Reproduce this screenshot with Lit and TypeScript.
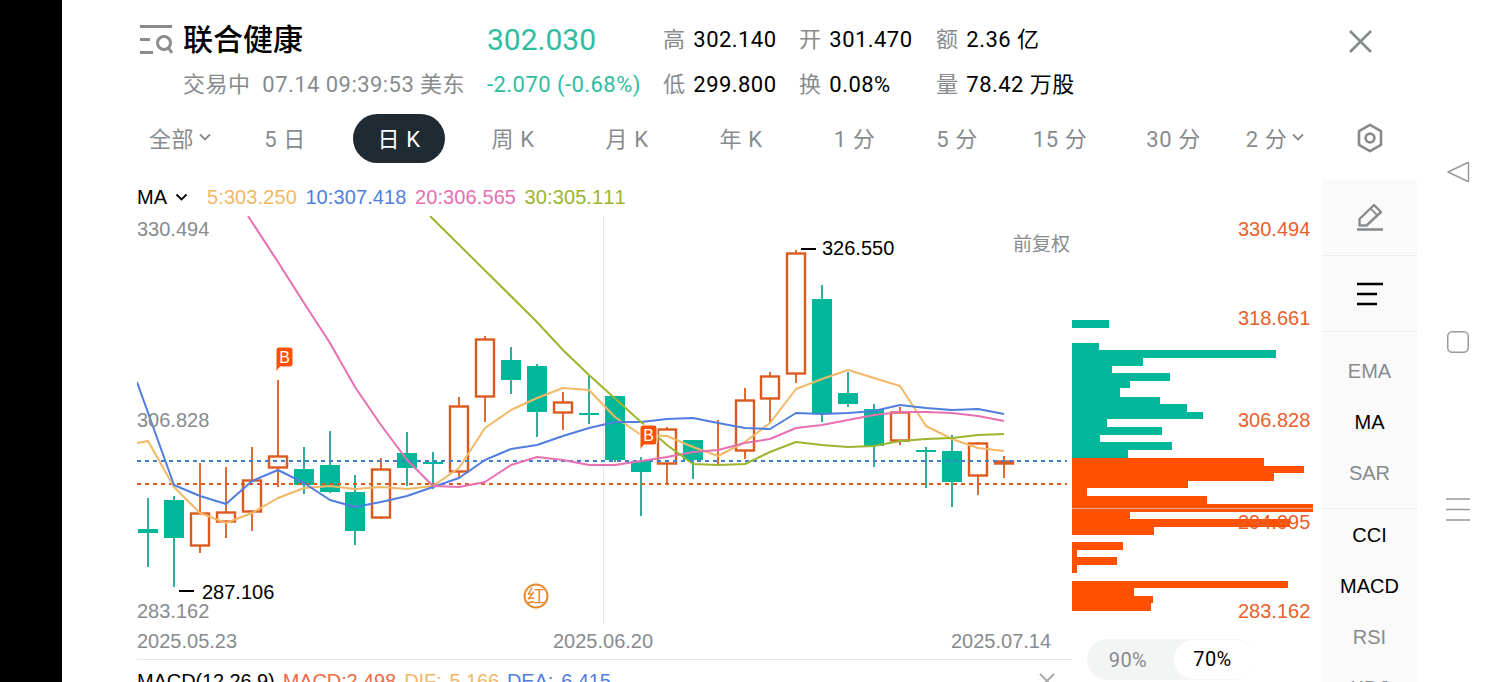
import { LitElement, html, css, svg } from 'lit'
import { customElement } from 'lit/decorators.js'

const GREEN = '#00b899'
const GREEN_WICK = '#1aa392'
const RED = '#dc5a1e'
const BAR_RED = '#ff5000'

// x, wick top, wick bottom, body top, body bottom (page pixels, read off the chart)
type Candle = [number, number, number, number, number]

const UP: Candle[] = [
  [200, 463, 553, 513, 546],
  [226, 467, 538, 512, 522],
  [252, 447, 531, 480, 512],
  [278, 380, 487, 456, 468],
  [381, 458, 519, 469, 518],
  [459, 397, 477, 406, 472],
  [485, 336, 422, 339, 397],
  [563, 392, 430, 402, 413],
  [667, 427, 484, 429, 464],
  [718, 420, 466, 455, 456],
  [745, 388, 459, 400, 451],
  [770, 372, 423, 376, 399],
  [796, 250, 383, 253, 374],
  [900, 407, 445, 412, 441],
  [978, 442, 495, 443, 476],
  [1004, 456, 478, 461, 464],
]

const DOWN: Candle[] = [
  [148, 498, 567, 529, 533],
  [174, 496, 587, 500, 538],
  [304, 447, 494, 469, 485],
  [330, 431, 493, 465, 492],
  [355, 475, 545, 492, 531],
  [407, 432, 486, 453, 468],
  [433, 452, 489, 462, 464],
  [511, 347, 394, 360, 380],
  [537, 364, 437, 366, 412],
  [589, 376, 424, 413, 415],
  [615, 396, 462, 396, 460],
  [641, 457, 516, 461, 472],
  [693, 440, 479, 440, 460],
  [822, 285, 422, 299, 413],
  [848, 372, 407, 393, 404],
  [874, 404, 467, 409, 446],
  [926, 447, 488, 450, 452],
  [952, 435, 507, 451, 482],
]

const MA5 =
  '137,443 148,441 174,487 200,513 226,523 252,513 278,498 304,488 330,486 355,489 381,487 407,489 433,486 459,468 485,428 511,410 537,398 563,388 589,390 615,417 641,435 667,436 693,447 718,456 745,442 770,423 796,389 822,379 848,370 874,378 900,386 926,426 952,439 978,448 1004,451'
const MA10 =
  '137,382 174,485 200,496 226,504 252,481 278,470 304,483 330,500 355,507 381,502 407,496 433,487 459,478 485,460 511,449 537,445 563,436 589,428 615,422 641,422 667,419 693,418 718,423 745,428 770,429 796,413 822,414 848,413 874,411 900,405 926,408 952,410 978,409 1004,414'
const MA20 =
  '248,216 278,262 304,303 330,343 355,387 381,425 407,460 433,486 459,487 485,482 511,465 537,457 563,460 589,465 615,465 641,461 667,457 693,452 718,450 745,443 770,439 796,428 822,425 848,420 874,415 900,412 926,412 952,413 978,416 1004,421'
const MA30 =
  '430,216 535,320 563,350 589,375 641,422 667,445 693,464 718,465 745,464 770,452 796,442 822,445 848,447 874,446 900,441 926,439 952,438 978,435 1004,434'

// volume profile: top, bottom, length
const PROFILE_UP = [
  [320, 328, 37], [343, 350, 27], [350, 358, 204], [358, 366, 71], [366, 373, 40],
  [373, 381, 98], [381, 388, 58], [388, 397, 48], [397, 404, 88], [404, 412, 115],
  [412, 419, 131], [419, 427, 35], [427, 435, 90], [435, 442, 28], [442, 450, 100],
  [450, 458, 56],
]
const PROFILE_DOWN = [
  [458, 466, 192], [466, 473, 232], [473, 481, 202], [481, 488, 116], [488, 496, 15],
  [496, 504, 135], [504, 512, 241], [512, 519, 58], [519, 527, 218], [527, 535, 82],
  [542, 550, 51], [550, 557, 5], [557, 565, 45], [565, 573, 5],
  [581, 588, 216], [588, 596, 62], [596, 603, 81], [603, 611, 79],
]

const TABS = ['5 日', '日 K', '周 K', '月 K', '年 K', '1 分', '5 分', '15 分', '30 分']

const chevron = (w = 12) => html`<svg class="chev" width=${w} height="8" viewBox="0 0 12 8">
  <path d="M1 1.5 6 6.5 11 1.5" fill="none" stroke="currentColor" stroke-width="1.8" />
</svg>`

@customElement('app-root')
export class AppRoot extends LitElement {
  static styles = css`
    :host {
      display: flex;
      width: 1500px;
      height: 682px;
      overflow: hidden;
      background: #fff;
      color: #000;
      font-family: Roboto, 'Noto Sans CJK SC', sans-serif;
    }

    .edge {
      flex: none;
      width: 62px;
      background: #000;
    }

    .main {
      flex: none;
      width: 1355px;
      display: flex;
      flex-direction: column;
    }

    .main > * {
      flex: none;
    }

    .head {
      display: grid;
      grid-template-columns: 44px 304px 176px 136px 137px auto;
      grid-template-rows: 44px 46px;
      align-items: center;
      height: 62px;
      padding: 18px 0 0 77px;
      font-size: 22px;
      letter-spacing: 0.45px;
      line-height: 30px;
    }

    .search {
      display: block;
      grid-row: 1;
    }

    .name {
      font-size: 30px;
      font-weight: 500;
      letter-spacing: 0;
      line-height: 40px;
    }

    .price {
      color: #2ebd9f;
      font-size: 30px;
      letter-spacing: 0;
    }

    .status {
      grid-column: 2;
      color: #888b8e;
      white-space: nowrap;
    }

    .status .clock {
      margin-left: 12px;
    }

    .change {
      color: #2ebd9f;
      white-space: nowrap;
    }

    .stat {
      white-space: nowrap;
    }

    .stat span {
      color: #888b8e;
      margin-right: 2px;
    }

    .close {
      position: absolute;
      left: 1348px;
      top: 29px;
    }

    .tabs {
      display: grid;
      grid-template-columns: 104px 106px 122px 106px 122px 106px 121px 84px 122px 105px 98px 92px;
      align-items: center;
      height: 50px;
      margin-top: 33px;
      padding-left: 66px;
      color: #888b8e;
      font-size: 22px;
      letter-spacing: 0.6px;
    }

    .tab {
      display: flex;
      align-items: center;
      justify-content: center;
      height: 49px;
      padding-bottom: 2px;
      box-sizing: border-box;
      white-space: nowrap;
    }

    .tab.on {
      width: 92px;
      justify-self: center;
      border-radius: 25px;
      background: #1f2a33;
      color: #fff;
    }

    .tab.gear {
      padding-bottom: 0;
    }

    .chev {
      margin-left: 5px;
    }

    .lower {
      display: grid;
      grid-template-columns: 1185px 95px;
      margin-top: 17px;
      padding-left: 75px;
    }

    .ma {
      display: flex;
      align-items: center;
      gap: 8.5px;
      height: 36px;
      padding-bottom: 2px;
      box-sizing: border-box;
      font-family: 'Liberation Sans', sans-serif;
      font-size: 20px;
      font-kerning: none;
      letter-spacing: 0.1px;
    }

    .ma .kind {
      display: flex;
      align-items: center;
      width: 61.5px;
      color: #000;
    }

    .ma .kind .chev {
      margin-left: 8px;
    }

    .chart {
      display: block;
    }

    .chart text {
      font-family: 'Liberation Sans', sans-serif;
      font-size: 20px;
    }

    .chart .axis {
      fill: #888b8e;
    }

    .chart .tag {
      fill: #e8602a;
    }

    .chart .note {
      fill: #000;
    }

    .chart .adj {
      font-family: 'Noto Sans CJK SC', sans-serif;
      font-size: 19px;
      fill: #888b8e;
    }

    .chart .b {
      fill: #fff;
      font-size: 16px;
      text-anchor: middle;
    }

    .chart .hong {
      fill: #e8892c;
      font-family: 'Noto Sans CJK SC', sans-serif;
      font-size: 18px;
      text-anchor: middle;
    }

    .foot {
      display: grid;
      grid-template-columns: 935px 250px;
    }

    .dates {
      display: grid;
      grid-template-columns: 416px 398px auto;
      align-items: center;
      height: 35px;
      border-bottom: 1px solid #e6e6e6;
      color: #888b8e;
      font-family: 'Liberation Sans', sans-serif;
      font-size: 20px;
    }

    .macd {
      display: flex;
      gap: 8px;
      padding-top: 9px;
      font-family: 'Liberation Sans', sans-serif;
      font-size: 20px;
      letter-spacing: -0.1px;
      word-spacing: -1.5px;
      line-height: 24px;
      white-space: nowrap;
    }

    .macd .x {
      position: absolute;
      left: 1039px;
      top: 673px;
    }

    .ratio {
      display: grid;
      grid-template-columns: 87px 81px;
      align-items: center;
      width: 168px;
      height: 41px;
      margin: 15px 0 0 15px;
      border-radius: 21px;
      background: #f3f5f5;
      color: #888b8e;
      font-size: 20px;
      letter-spacing: 0.4px;
      text-align: center;
    }

    .ratio .off {
      padding-right: 5px;
    }

    .ratio .on {
      height: 39px;
      padding-right: 4px;
      box-sizing: border-box;
      line-height: 39px;
      border-radius: 20px;
      background: #fff;
      color: #000;
    }

    .side {
      display: flex;
      flex-direction: column;
      height: 503px;
      overflow: hidden;
      background: #fafafa;
      font-family: 'Liberation Sans', sans-serif;
      font-size: 20px;
      color: #000;
    }

    .tool {
      display: flex;
      flex: none;
      align-items: center;
      justify-content: center;
      height: 76px;
      border-bottom: 1px solid #ececec;
      box-sizing: border-box;
    }

    .group {
      flex: none;
      padding: 14px 0 9px;
      border-bottom: 1px solid #ececec;
    }

    .group:last-child {
      padding-top: 1px;
      border-bottom: none;
    }

    .ind {
      height: 51px;
      line-height: 51px;
      text-align: center;
    }

    .ind.off {
      color: #888b8e;
    }

    .nav {
      flex: none;
      width: 83px;
      display: flex;
      flex-direction: column;
      align-items: center;
      gap: 146px;
      padding-top: 160px;
      box-sizing: border-box;
    }

    .nav svg {
      display: block;
      margin-left: -1px;
    }

    .nav .lines {
      margin-top: -2px;
    }
  `

  private renderCandles() {
    const up = UP.map(
      ([x, wt, wb, bt, bb]) => svg`
        <line x1=${x} x2=${x} y1=${wt} y2=${wb} stroke=${RED} stroke-width="1.8" />
        <rect x=${x - 9} y=${bt + 0.5} width="18" height=${bb - bt - 1} fill="#fff" stroke=${RED} stroke-width="2.4" />`,
    )
    const down = DOWN.map(
      ([x, wt, wb, bt, bb]) => svg`
        <line x1=${x} x2=${x} y1=${wt} y2=${wb} stroke=${GREEN_WICK} stroke-width="1.8" />
        <rect x=${x - 10} y=${bt} width="20" height=${bb - bt} fill=${GREEN} />`,
    )
    return [up, down]
  }

  private renderProfile() {
    const bars = (rows: number[][], fill: string) =>
      rows.map(
        ([t, b, w]) => svg`<rect x="1072" y=${t} width=${w} height=${b - t} fill=${fill} />`,
      )
    return [bars(PROFILE_UP, GREEN), bars(PROFILE_DOWN, BAR_RED)]
  }

  private renderChart() {
    const line = (points: string, color: string) =>
      svg`<polyline points=${points} fill="none" stroke=${color} stroke-width="2" stroke-linejoin="round" />`
    const badge = (x: number, y: number) => svg`
      <path
        d="M${x + 3} ${y}h11a3 3 0 0 1 3 3v14a3 3 0 0 1 -3 3h-10l-4 5v-22a3 3 0 0 1 3 -3z"
        fill=${BAR_RED}
        stroke="#fff"
        stroke-width="1"
      />
      <text class="b" x=${x + 8.5} y=${y + 16}>B</text>`

    return html`<svg class="chart" width="1185" height="408" viewBox="137 216 1185 408">
      <line x1="603.5" x2="603.5" y1="216" y2="624" stroke="#e8e8e8" />
      ${this.renderCandles()}
      <line x1="137" x2="1067" y1="461" y2="461" stroke="#3f7fcf" stroke-width="2" stroke-dasharray="4 4" />
      <line x1="137" x2="1067" y1="484" y2="484" stroke=${RED} stroke-width="2" stroke-dasharray="4 4" />
      ${line(MA5, '#f2b866')} ${line(MA10, '#4f7ee0')} ${line(MA20, '#e86fb0')} ${line(MA30, '#9ab52e')}
      ${badge(276, 347)} ${badge(640, 425)}
      <circle cx="536" cy="596" r="11.5" fill="none" stroke="#e8892c" stroke-width="2" />
      <text class="hong" x="536" y="602.5">红</text>

      <text class="axis" x="137" y="236">330.494</text>
      <text class="axis" x="137" y="427">306.828</text>
      <text class="axis" x="137" y="618">283.162</text>
      <text class="adj" x="1013" y="251">前复权</text>
      <line x1="801" x2="816" y1="249" y2="249" stroke="#000" stroke-width="2" />
      <text class="note" x="822" y="255">326.550</text>
      <line x1="179" x2="194" y1="591" y2="591" stroke="#000" stroke-width="2" />
      <text class="note" x="202" y="599">287.106</text>

      ${this.renderProfile()}
      <line x1="1072" x2="1313" y1="508.5" y2="508.5" stroke="#d8b0a0" />
      <text class="tag" x="1238" y="236">330.494</text>
      <text class="tag" x="1238" y="325">318.661</text>
      <text class="tag" x="1238" y="427">306.828</text>
      <text class="tag" x="1238" y="529">294.995</text>
      <text class="tag" x="1238" y="618">283.162</text>
    </svg>`
  }

  render() {
    return html`
      <div class="edge"></div>
      <div class="main">
        <div class="head">
          <svg class="search" width="34" height="30" viewBox="0 0 34 30" fill="none" stroke="#8a8d90" stroke-width="3">
            <path d="M1 1.5h32M1 14.5h10M1 27.5h13" />
            <circle cx="25" cy="18" r="6.5" />
            <path d="M29.5 23 33 28" />
          </svg>
          <div class="name">联合健康</div>
          <div class="price">302.030</div>
          <div class="stat"><span>高</span> 302.140</div>
          <div class="stat"><span>开</span> 301.470</div>
          <div class="stat"><span>额</span> 2.36 亿</div>
          <div class="status">交易中<span class="clock">07.14 09:39:53 美东</span></div>
          <div class="change">-2.070 (-0.68%)</div>
          <div class="stat"><span>低</span> 299.800</div>
          <div class="stat"><span>换</span> 0.08%</div>
          <div class="stat"><span>量</span> 78.42 万股</div>
        </div>
        <svg class="close" width="25" height="25" viewBox="0 0 25 25" stroke="#868b8e" stroke-width="2.6">
          <path d="M2 2 23 23M23 2 2 23" />
        </svg>

        <div class="tabs">
          <div class="tab">全部${chevron()}</div>
          ${TABS.map((t) => html`<div class="tab ${t === '日 K' ? 'on' : ''}">${t}</div>`)}
          <div class="tab">2 分${chevron()}</div>
          <div class="tab gear">
            <svg width="26" height="30" viewBox="0 0 26 30" fill="none" stroke="#888b8e" stroke-width="2.6">
              <path d="M13 1.8 24 8.2v13.6L13 28.2 2 21.8V8.2z" stroke-linejoin="round" />
              <circle cx="13" cy="15" r="4.4" />
            </svg>
          </div>
        </div>

        <div class="lower">
          <div>
            <div class="ma">
              <div class="kind">MA${chevron(13)}</div>
              <span style="color:#f2b866">5:303.250</span>
              <span style="color:#4f7ee0">10:307.418</span>
              <span style="color:#e86fb0">20:306.565</span>
              <span style="color:#9ab52e">30:305.111</span>
            </div>
            ${this.renderChart()}
            <div class="foot">
              <div>
                <div class="dates">
                  <span>2025.05.23</span><span>2025.06.20</span><span>2025.07.14</span>
                </div>
                <div class="macd">
                  <span>MACD(12,26,9)</span>
                  <span style="color:#f06a45">MACD:2.498</span>
                  <span style="color:#f2b866">DIF:&nbsp; 5.166</span>
                  <span style="color:#4f7ee0">DEA:&nbsp; 6.415</span>
                  <svg class="x" width="16" height="16" viewBox="0 0 16 16" stroke="#a8acae" stroke-width="2">
                    <path d="M1 1 15 15M15 1 1 15" />
                  </svg>
                </div>
              </div>
              <div class="ratio">
                <div class="off">90%</div>
                <div class="on">70%</div>
              </div>
            </div>
          </div>

          <div class="side">
            <div class="tool">
              <svg width="26" height="28" viewBox="0 1 26 28" fill="none" stroke="#888b8e" stroke-width="2.4">
                <path d="M2.5 22.5V16L17 2l7 7-14.5 13.5z" stroke-linejoin="round" />
                <path d="M13.5 5.5l7 7" stroke-width="1.8" />
                <path d="M0 26.5h26" stroke-width="2.6" />
              </svg>
            </div>
            <div class="tool">
              <svg width="26" height="24" viewBox="0 0 26 24" stroke="#000" stroke-width="2.4">
                <path d="M0 2h26M0 12h20M0 22h20" />
              </svg>
            </div>
            <div class="group">
              <div class="ind off">EMA</div>
              <div class="ind">MA</div>
              <div class="ind off">SAR</div>
            </div>
            <div class="group">
              <div class="ind">CCI</div>
              <div class="ind">MACD</div>
              <div class="ind off">RSI</div>
              <div class="ind off">KDJ</div>
            </div>
          </div>
        </div>
      </div>

      <div class="nav">
        <svg width="24" height="24" viewBox="0 0 24 24" fill="none" stroke="#9a9a9a" stroke-width="1.5">
          <path d="M2 12 22 2.5a.5.5 0 0 1 .5.5v18a.5.5 0 0 1-.5.5z" stroke-linejoin="round" />
        </svg>
        <svg width="24" height="24" viewBox="0 0 24 24" fill="none" stroke="#9a9a9a" stroke-width="1.5">
          <rect x="1.75" y="1.75" width="20.5" height="20.5" rx="4.5" />
        </svg>
        <svg class="lines" width="24" height="24" viewBox="0 0 24 24" fill="none" stroke="#9a9a9a" stroke-width="1.5">
          <path d="M0 1h24M0 11.5h24M0 22h24" />
        </svg>
      </div>
    `
  }
}

declare global {
  interface HTMLElementTagNameMap {
    'app-root': AppRoot
  }
}
